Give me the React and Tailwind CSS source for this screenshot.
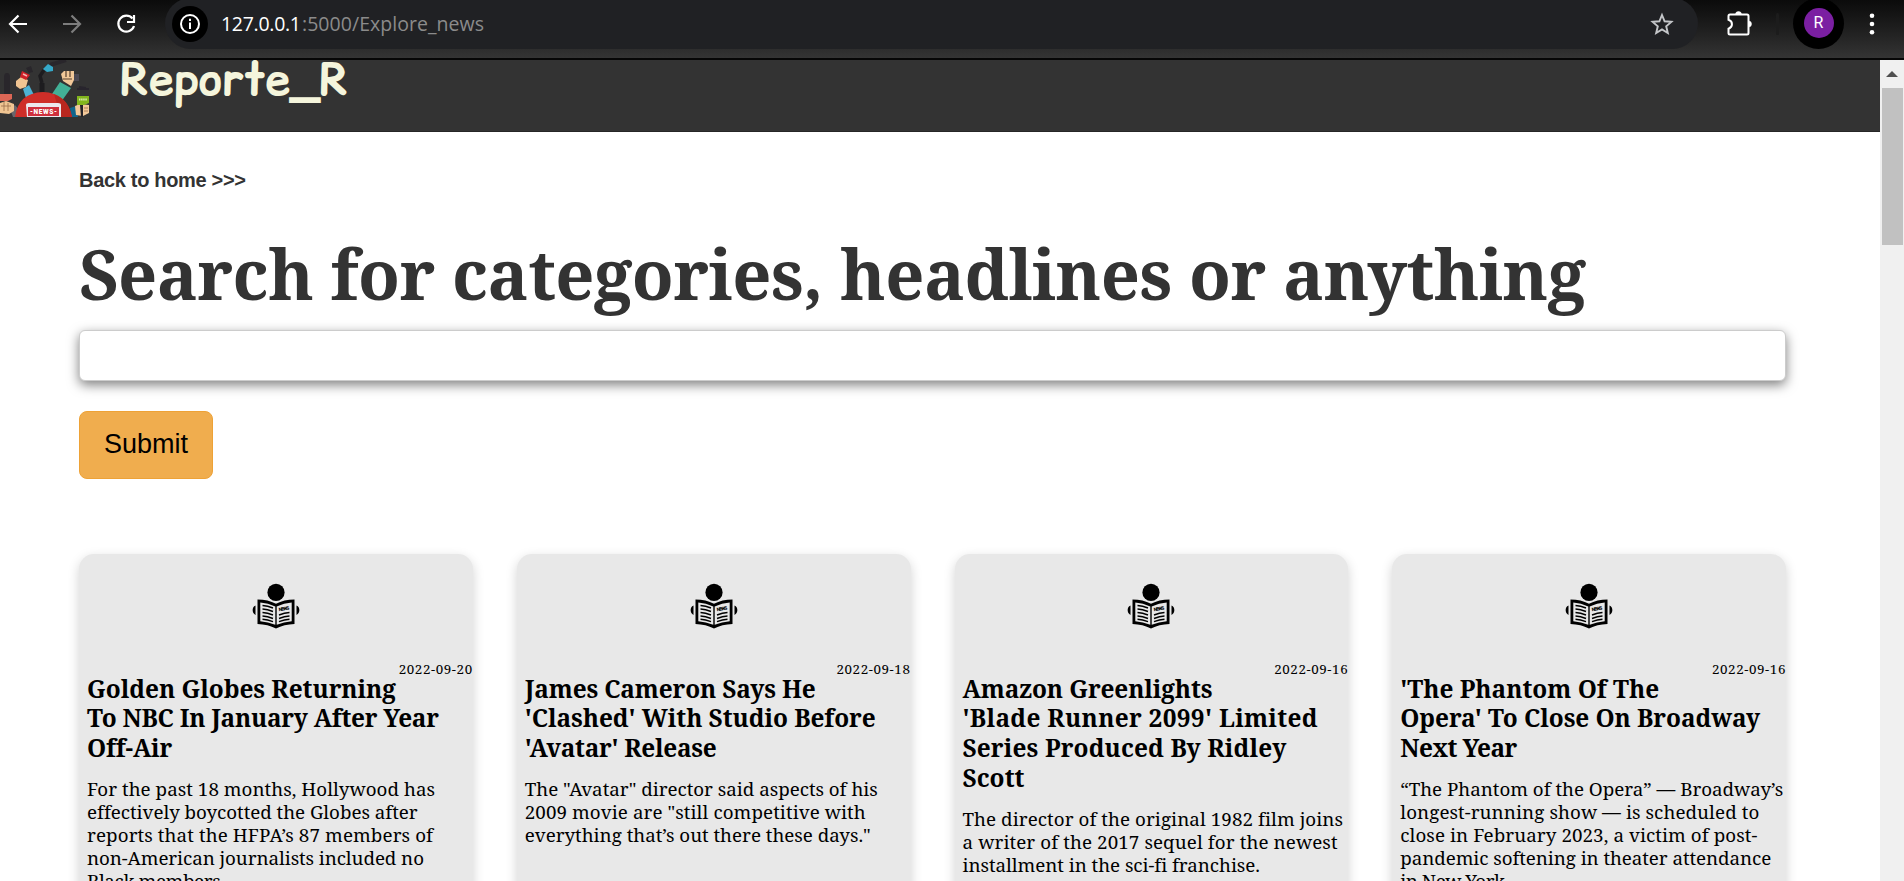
import { useLayoutEffect, useRef, useState } from "react";

const articles = [
  {
    date: "2022-09-20",
    title: [
      ["Golden Globes Returning", 309],
      ["To NBC In January After Year", 352],
      ["Off-Air", 84],
    ],
    body: [
      ["For the past 18 months, Hollywood has", 348],
      ["effectively boycotted the Globes after", 330],
      ["reports that the HFPA’s 87 members of", 346],
      ["non-American journalists included no", 337],
      ["Black members.", 138],
    ],
  },
  {
    date: "2022-09-18",
    title: [
      ["James Cameron Says He", 291],
      ["'Clashed' With Studio Before", 351],
      ["'Avatar' Release", 192],
    ],
    body: [
      ['The "Avatar" director said aspects of his', 353],
      ['2009 movie are "still competitive with', 341],
      ['everything that’s out there these days."', 346],
    ],
  },
  {
    date: "2022-09-16",
    title: [
      ["Amazon Greenlights", 250],
      ["'Blade Runner 2099' Limited", 355],
      ["Series Produced By Ridley", 324],
      ["Scott", 62],
    ],
    body: [
      ["The director of the original 1982 film joins", 380],
      ["a writer of the 2017 sequel for the newest", 375],
      ["installment in the sci-fi franchise.", 297],
    ],
  },
  {
    date: "2022-09-16",
    title: [
      ["'The Phantom Of The", 259],
      ["Opera' To Close On Broadway", 360],
      ["Next Year", 117],
    ],
    body: [
      ["“The Phantom of the Opera” — Broadway’s", 383],
      ["longest-running show — is scheduled to", 359],
      ["close in February 2023, a victim of post-", 357],
      ["pandemic softening in theater attendance", 371],
      ["in New York.", 109],
    ],
  },
];

/* One line of text whose tracking is set so that it fills the given width. */
function Line({ text, width, className = "" }) {
  const ref = useRef(null);
  const [spacing, setSpacing] = useState(0);
  useLayoutEffect(() => {
    const natural = ref.current.getBoundingClientRect().width;
    setSpacing((width - natural) / (text.length - 1));
  }, [text, width]);
  return (
    <span className={`block whitespace-nowrap ${className}`}>
      <span ref={ref} style={{ letterSpacing: spacing }}>
        {text}
      </span>
    </span>
  );
}

function BrowserBar() {
  return (
    <div className="flex h-[60px] shrink-0 items-start overflow-hidden border-b-2 border-[#060606] bg-linear-to-b from-[#0b0b0b] to-[#343434]">
      <div className="flex h-12 w-[165px] shrink-0 items-center">
        <svg className="h-12 w-[165px]" viewBox="0 0 165 48" fill="none" strokeWidth="2.2">
          <path d="M27 24H10.5M18.5 15.5L10 24l8.500 8.500" stroke="#fff" />
          <path d="M63 24h16.500M71.500 15.500L80 24l-8.500 8.500" stroke="#7d7d7d" />
          <path d="M132.500 18.500A8 8 0 1 0 134 26" stroke="#fff" />
          <path d="M134 15v7h-7" stroke="#fff" />
        </svg>
      </div>
      <div className="-mt-[2px] flex h-[51px] w-[1533px] shrink-0 items-center rounded-full bg-[#202124] pl-[7px]">
        <div className="flex size-9 items-center justify-center rounded-full bg-black">
          <svg className="size-[22px]" viewBox="0 0 22 22" fill="none">
            <circle cx="11" cy="11" r="9" stroke="#fff" strokeWidth="2" />
            <path d="M11 9.500v6.500M11 5.800v2.200" stroke="#fff" strokeWidth="2" />
          </svg>
        </div>
        <div className="ml-[13px] flex font-['Open_Sans','Noto_Sans',sans-serif] text-[19.5px] leading-6">
          <Line text="127.0.0.1" width={80} className="w-[81px] text-white" />
          <Line text=":5000/Explore_news" width={182} className="text-[#8b8b8b]" />
        </div>
        <svg className="mr-[24px] ml-auto size-6" viewBox="0 0 24 24" fill="none" stroke="#c4c6c9" strokeWidth="1.9">
          <path d="M12 3l2.600 6.300 6.800.55-5.200 4.450 1.600 6.650L12 17.400l-5.800 3.550 1.600-6.650-5.200-4.450 6.800-.55z" />
        </svg>
      </div>
      <div className="flex h-12 flex-1 items-center">
        <svg className="ml-[27px] size-[28px]" viewBox="0 0 28 28" fill="none">
          <path
            d="M5 4.500h17q1.500 0 1.500 1.500v17q0 1.500-1.500 1.500H5q-1.500 0-1.500-1.500v-4.200c4.600-1.600 4.600-7.400 0-9V6q0-1.500 1.500-1.500z"
            stroke="#fff"
            strokeWidth="2"
          />
          <path d="M10.500 4.500a3 3 0 0 1 6 0zM23.500 11a3 3 0 0 1 0 6z" fill="#fff" stroke="#fff" strokeWidth=".5" />
        </svg>
        <div className="ml-[23px] h-[22px] w-[3px] rounded bg-[#1c1c1c]" />
        <div className="-mt-[2px] ml-[14px] flex size-[51px] items-center justify-center rounded-full bg-black">
          <div className="flex size-[30px] items-center justify-center rounded-full bg-[#7b1fa2] font-[Roboto,sans-serif] text-[16px] text-white">
            R
          </div>
        </div>
        <svg className="ml-[17px] h-6 w-[22px]" viewBox="0 0 22 24" fill="#fff">
          <circle cx="11" cy="3.800" r="2.300" />
          <circle cx="11" cy="12" r="2.300" />
          <circle cx="11" cy="20.200" r="2.300" />
        </svg>
      </div>
    </div>
  );
}

function NewsLogo() {
  return (
    <svg className="h-[57px] w-[90px] shrink-0" viewBox="0 0 90 57">
      <path d="M4 17q0-4 3-4t3 4v17H4z" fill="#29262b" />
      <path d="M26 8l5-2 2 6-4 1z" fill="#29262b" />
      <path d="M42 32V23" stroke="#1d1c1f" strokeWidth="5" />
      <path d="M42 23l-2-7 4-6" fill="none" stroke="#1d1c1f" strokeWidth="3.500" />
      <path d="M50 5L66 0" stroke="#29262b" strokeWidth="4" />
      <path d="M43 9l5-5 5 3v4l-6 1z" fill="#35a9c9" />
      <path d="M23 29l6-4 7 14-8 5z" fill="#4db2d4" />
      <path d="M16 21l5-4 7 3-2 7-6 2-4-3z" fill="#f0c592" />
      <path d="M22 11l8 4-4 5-6-3z" fill="#cf2027" />
      <path d="M23 14l4 2" stroke="#f4b4b0" strokeWidth="1.500" />
      <path d="M52 34l8-12 11 6-10 14z" fill="#42b096" />
      <path d="M61 14l3-3h10v9l-3 6-8-5z" fill="#f2c899" />
      <path d="M63 19h9M66 11v6M70 11v6" stroke="#56402f" strokeWidth="1.200" />
      <path d="M74 14h5v7h-5z" fill="#4b4853" />
      <path d="M77 29h12M79 27l7 1" stroke="#28252d" strokeWidth="2" />
      <path d="M10 49l5-4 5 6-4 6h-3z" fill="#69666b" />
      <path d="M0 43l6-2 8 3v7l-5 3-9-1z" fill="#f0c592" />
      <path d="M1 46h10M4 42v9M8 43v8" stroke="#9b6d4a" strokeWidth=".8" />
      <path d="M0 34h12v5l-4 2H0z" fill="#dc6655" />
      <path d="M70 48l6-2 2 11h-7z" fill="#10648b" />
      <path d="M75 46l5-2 9 1v8l-6 3-7-1z" fill="#f2c899" />
      <path d="M80 45h3v12h-2z" fill="#242227" />
      <path d="M84 48h4M84 51h4" stroke="#9b6d4a" strokeWidth=".8" />
      <path d="M77 36h12v7l-5 2h-7z" fill="#82b51d" />
      <path d="M79 39.500h8" stroke="#d8e9ac" strokeWidth="2" strokeDasharray="1.500 .6" />
      <path d="M15 57q3-24 28-25 24 1 29 25z" fill="#cf2e28" />
      <path d="M54 34q15 6 18 23H61z" fill="#b9271f" />
      <path d="M27 57l-1-12q0-2 3-2h29q3 0 3 2v12z" fill="#ece8ed" />
      <path d="M28 47h31v9H28z" fill="#cf303d" />
      <text x="43.500" y="54" fill="#fff" fontFamily="Roboto, sans-serif" fontSize="6.500" fontWeight="900" textAnchor="middle" textLength="27">
        -NEWS-
      </text>
    </svg>
  );
}

function ReaderIcon() {
  return (
    <svg className="h-[46px] w-12" viewBox="0 0 48 46">
      <circle cx="24" cy="9.400" r="8.600" fill="#000" />
      <path d="M3.500 22.500C-.5 24-.1 30.500 3.500 32zM44.500 22.500c4 1.500 3.600 8 0 9.500z" fill="#000" />
      <path d="M5.500 16.500Q16 16.500 24 20.800q8-4.300 18.500-4.300V41Q32 41.300 24 45.500 16 41.300 5.500 41z" fill="#000" />
      <path d="M8.300 19.500Q16 20 23.300 23.500v18.300Q16 38.800 8.300 38.300zM39.700 19.500Q32 20 24.700 23.500v18.300q7.200-3 15-3.500z" fill="#e8e8e8" />
      <g fill="none" stroke="#000" strokeWidth="1.400">
        <path d="M10.500 22.500q5 .3 10.500 2.500M10.500 26q5 .3 10.500 2.500M10.500 29.500q5 .3 10.500 2.500M10.500 33q5 .3 10.500 2.500M10.500 36.300q5 .2 10.500 2.300" />
        <path d="M27 32q5.500-2.200 10.500-2.500M27 35.500q5.500-2.200 10.500-2.500M27 38.600q5.500-2.100 10.500-2.300" />
      </g>
      <text x="27" y="28.200" fill="#000" fontFamily="Roboto, sans-serif" fontSize="4.800" fontWeight="900" transform="rotate(-9 27 28.200)" textLength="10.500">
        NEWS
      </text>
    </svg>
  );
}

function Card({ article }) {
  return (
    <article className="flex h-[420px] flex-col rounded-[15px] bg-[#e8e8e8] pt-[29px] shadow-[0_4px_12px_rgba(0,0,0,0.18)]">
      <div className="flex h-[78px] justify-center">
        <ReaderIcon />
      </div>
      <div className="flex h-[12.5px] justify-end text-[13.4px] leading-[17px]">
        <Line text={article.date} width={73.500} />
      </div>
      <h2 className="pl-2 text-[24.4px] leading-[29.75px] font-bold">
        {article.title.map(([text, width]) => (
          <Line key={text} text={text} width={width} />
        ))}
      </h2>
      <p className="mt-[15.5px] pl-2 text-[18.8px] leading-[23px]">
        {article.body.map(([text, width]) => (
          <Line key={text} text={text} width={width} />
        ))}
      </p>
    </article>
  );
}

export default function App() {
  return (
    <div className="flex h-[881px] w-[1904px] flex-col overflow-hidden bg-white text-black">
      <BrowserBar />
      <div className="flex min-h-0 flex-1">
        <div className="flex-1 overflow-hidden font-['Noto_Serif',Caladea,'Liberation_Serif',serif]">
          <header className="flex h-[72px] items-start border-b border-[#262626] bg-[#333]">
            <NewsLogo />
            <div className="ml-[30px] font-['Comic_Relief','Comic_Sans_MS','Comic_Neue',Inter,sans-serif] text-[45px] leading-[38px] font-bold text-[#f5f5dc]">
              <Line text="Reporte_R" width={228} />
            </div>
          </header>
          <main className="px-[79px] pt-[36px] pr-[94px]">
            <a className="block font-['Liberation_Sans',Arial,sans-serif] text-[20px] leading-6 font-bold text-[#333]">
              <Line text="Back to home >>>" width={167} />
            </a>
            <h1 className="mt-[39px] h-[99px] text-[68.5px] leading-[86px] font-bold text-[#333]">
              <Line text="Search for categories, headlines or anything" width={1507} />
            </h1>
            <input className="block h-[51px] w-full rounded-[6px] border border-[#ccc] bg-white px-3 shadow-[0_4px_12px_rgba(0,0,0,0.5)] outline-none" />
            <button className="mt-[30px] flex h-[68px] w-[134px] justify-center rounded-[8px] border border-[#eea236] bg-[#f0ad4e] pt-[16px] font-['Liberation_Sans',Arial,sans-serif] text-[27px] leading-[32px]">
              Submit
            </button>
            <section className="mt-[75px] grid grid-cols-4 gap-[44px]">
              {articles.map((article) => (
                <Card key={article.title[0][0]} article={article} />
              ))}
            </section>
          </main>
        </div>
        <div className="flex w-6 shrink-0 flex-col items-center bg-[#f0f0f0]">
          <div className="flex h-7 items-center">
            <svg className="h-[6px] w-[12px]" viewBox="0 0 12 6" fill="#505050">
              <path d="M6 0l6 6H0z" />
            </svg>
          </div>
          <div className="ml-[1px] h-[157px] w-[21px] bg-[#c1c1c1]" />
        </div>
      </div>
    </div>
  );
}
